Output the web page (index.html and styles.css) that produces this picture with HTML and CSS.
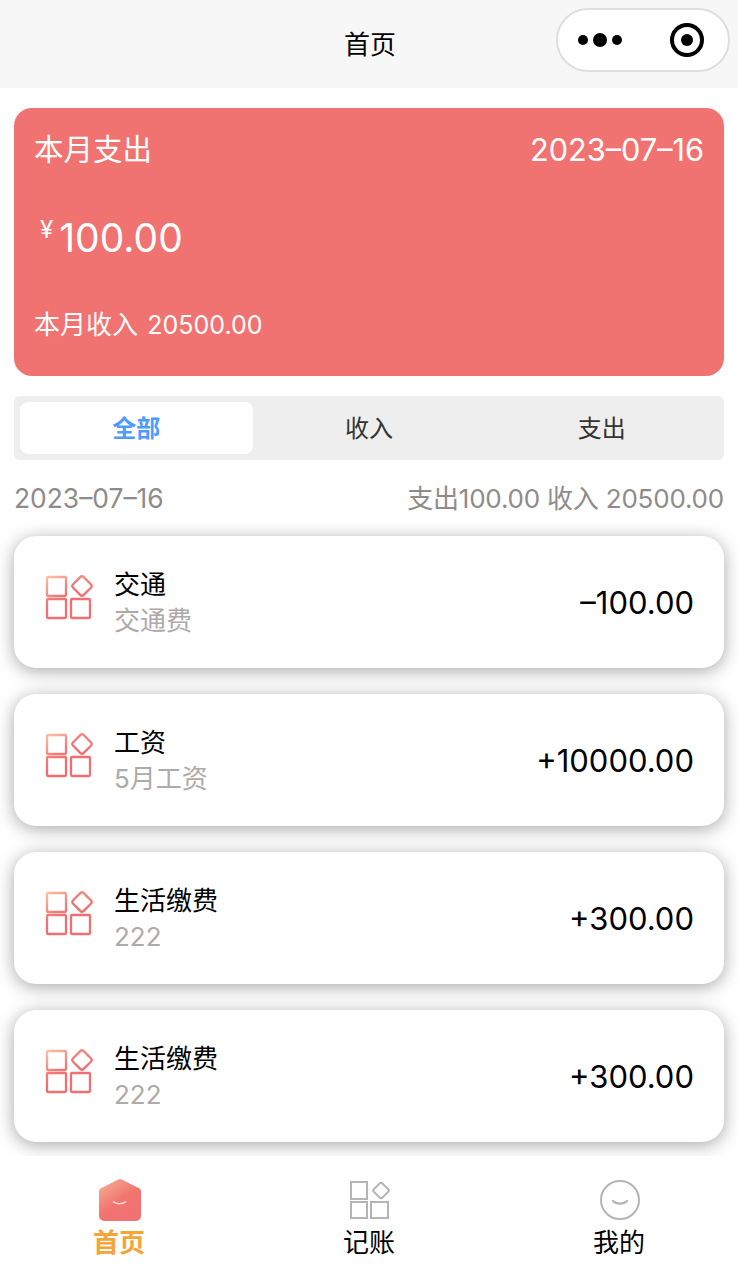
FILE: index.html
```html
<!DOCTYPE html>
<html lang="zh-CN">
<head>
    <meta charset="UTF-8">
    <meta name="viewport" content="width=device-width, initial-scale=1.0">
    <title>首页</title>
    <link rel="stylesheet" href="styles.css">
</head>
<body>
    <svg class="defs" width="0" height="0">
        <defs>
            <linearGradient id="grid-grad" gradientUnits="userSpaceOnUse" x1="3" y1="0" x2="20" y2="28">
                <stop offset="0" stop-color="#fcc8a8"/>
                <stop offset="0.7" stop-color="#f27c79"/>
                <stop offset="1" stop-color="#f06f73"/>
            </linearGradient>
            <linearGradient id="home-grad" x1="0.1" y1="0" x2="0.7" y2="0.8">
                <stop offset="0" stop-color="#f6b096"/>
                <stop offset="0.65" stop-color="#f1746f"/>
                <stop offset="1" stop-color="#f17273"/>
            </linearGradient>
            <g id="grid-icon" fill="none" stroke="url(#grid-grad)" stroke-width="2.300" stroke-linejoin="round">
                <rect x="3" y="3" width="19" height="19" rx="1"/>
                <rect x="3" y="25" width="19" height="19" rx="1"/>
                <rect x="27" y="25" width="19" height="19" rx="1"/>
                <rect x="30.500" y="4.500" width="15" height="15" rx="2.500" transform="rotate(45 38 12)"/>
            </g>
        </defs>
    </svg>

    <header class="nav">
        <span class="nav-title">首页</span>
        <div class="capsule">
            <div class="dots"><i></i><i class="big"></i><i></i></div>
            <div class="target"><i></i></div>
        </div>
    </header>

    <main class="content">
        <section class="hero">
            <div class="hero-top">
                <span class="hero-label">本月支出</span>
                <span class="hero-date">2023–07–16</span>
            </div>
            <div class="hero-amount"><span class="yen">¥</span>100.00</div>
            <div class="hero-income">本月收入 <span class="hero-income-num">20500.00</span></div>
        </section>

        <div class="tabs">
            <div class="tab active">全部</div>
            <div class="tab">收入</div>
            <div class="tab">支出</div>
        </div>

        <div class="day-row">
            <span class="day-date">2023–07–16</span>
            <span class="day-sum">支出100.00 收入 20500.00</span>
        </div>

        <ul class="list">
            <li class="card">
                <svg class="card-icon" viewBox="0 0 50 46"><use href="#grid-icon"/></svg>
                <div class="card-text">
                    <div class="card-title">交通</div>
                    <div class="card-note">交通费</div>
                </div>
                <div class="card-money">–100.00</div>
            </li>
            <li class="card">
                <svg class="card-icon" viewBox="0 0 50 46"><use href="#grid-icon"/></svg>
                <div class="card-text">
                    <div class="card-title">工资</div>
                    <div class="card-note">5月工资</div>
                </div>
                <div class="card-money">+10000.00</div>
            </li>
            <li class="card">
                <svg class="card-icon" viewBox="0 0 50 46"><use href="#grid-icon"/></svg>
                <div class="card-text">
                    <div class="card-title">生活缴费</div>
                    <div class="card-note">222</div>
                </div>
                <div class="card-money">+300.00</div>
            </li>
            <li class="card">
                <svg class="card-icon" viewBox="0 0 50 46"><use href="#grid-icon"/></svg>
                <div class="card-text">
                    <div class="card-title">生活缴费</div>
                    <div class="card-note">222</div>
                </div>
                <div class="card-money">+300.00</div>
            </li>
        </ul>
    </main>

    <nav class="tabbar">
        <div class="bar-item active">
            <svg class="bar-icon" viewBox="0 0 44 44">
                <path d="M20.800 1.800a3.600 3.600 0 0 1 4.400 0L42.500 10.500a3 3 0 0 1 1.500 2.500V38a5 5 0 0 1-5 5H7a5 5 0 0 1-5-5V13a3 3 0 0 1 1.500-2.500z" fill="url(#home-grad)"/>
                <path d="M16.500 23.800c3 2.600 9 2.600 12 0" fill="none" stroke="#fcd5cc" stroke-width="1.600" stroke-linecap="round"/>
            </svg>
            <span>首页</span>
        </div>
        <div class="bar-item">
            <svg class="bar-icon" viewBox="0 0 44 44" fill="none" stroke="#b4b4b4" stroke-width="2">
                <rect x="4" y="4" width="16" height="17"/>
                <rect x="4" y="24" width="16" height="16"/>
                <rect x="24" y="24" width="17" height="16"/>
                <rect x="28" y="6.500" width="12" height="12" rx="2" transform="rotate(45 34 12.500)"/>
            </svg>
            <span>记账</span>
        </div>
        <div class="bar-item">
            <svg class="bar-icon" viewBox="0 0 44 44" fill="none" stroke="#b4b4b4">
                <circle cx="23" cy="22" r="19" stroke-width="2"/>
                <path d="M16 23c3.500 3.500 10.500 3.500 14 0" stroke-width="2.400" stroke-linecap="round"/>
            </svg>
            <span>我的</span>
        </div>
    </nav>
</body>
</html>
```

FILE: styles.css
```css
* {
    box-sizing: border-box;
}

body {
    display: flex;
    flex-direction: column;
    height: 100vh;
    margin: 0;
    background-color: white;
    color: black;
    font-family: Inter, "Noto Sans CJK SC", sans-serif;
    overflow: hidden;
}

.defs {
    position: absolute;
}

.nav {
    display: flex;
    justify-content: center;
    align-items: center;
    flex: none;
    position: relative;
    height: 88px;
    padding: 0 0 4px 2px;
    background-color: #f7f7f7;
}

.nav-title {
    font-size: 26px;
}

.capsule {
    display: flex;
    justify-content: space-between;
    align-items: center;
    position: absolute;
    top: 8px;
    left: 556px;
    width: 174px;
    height: 64px;
    padding: 0 24px 0 20px;
    background-color: white;
    border: 2px solid #dedede;
    border-radius: 32px;
}

.dots {
    display: flex;
    align-items: center;
    gap: 5px;
}

.dots i {
    display: block;
    width: 10px;
    height: 10px;
    background-color: black;
    border-radius: 50%;
}

.dots i.big {
    width: 14px;
    height: 14px;
}

.target {
    display: flex;
    justify-content: center;
    align-items: center;
    width: 34px;
    height: 34px;
    border: 4px solid black;
    border-radius: 50%;
}

.target i {
    display: block;
    width: 12px;
    height: 12px;
    background-color: black;
    border-radius: 50%;
}

.content {
    flex: 1;
    min-height: 0;
    padding: 20px 14px 0;
    overflow: hidden;
}

.hero {
    height: 268px;
    padding: 21px 20px 0;
    background-color: #f17371;
    border-radius: 18px;
    color: white;
}

.hero-top {
    display: flex;
    justify-content: space-between;
    align-items: center;
    height: 40px;
}

.hero-label {
    padding-bottom: 4px;
    font-size: 29.500px;
}

.hero-date {
    font-size: 30.700px;
}

.hero-amount {
    margin-top: 44px;
    padding-left: 6px;
    font-size: 39px;
    line-height: 50px;
}

.yen {
    position: relative;
    top: -14px;
    margin-right: 6px;
    font-size: 24px;
}

.hero-income {
    margin-top: 38px;
    font-size: 26px;
    line-height: 36px;
}

.hero-income-num {
    margin-left: 2px;
    font-size: 25px;
}

.tabs {
    display: flex;
    height: 64px;
    margin-top: 20px;
    padding: 6px;
    background-color: #eeeeee;
    border-radius: 6px;
}

.tab {
    display: flex;
    justify-content: center;
    align-items: center;
    flex: 1;
    padding-bottom: 4px;
    border-radius: 8px;
    font-size: 24px;
    color: #333333;
}

.tab.active {
    background-color: white;
    color: #4f9bfb;
    font-weight: 700;
}

.day-row {
    display: flex;
    justify-content: space-between;
    align-items: center;
    height: 36px;
    margin-top: 20px;
    font-size: 26px;
    color: #8f8b8b;
}

.day-date {
    font-size: 26.400px;
}

.day-sum {
    padding-bottom: 4px;
    letter-spacing: -0.2px;
}

.list {
    display: flex;
    flex-direction: column;
    gap: 26px;
    margin: 20px 0 0;
    padding: 0;
    list-style: none;
}

.card {
    display: flex;
    align-items: center;
    flex: none;
    height: 132px;
    padding: 0 30px;
    background-color: white;
    border-radius: 22px;
    box-shadow: 0 3px 18px rgba(0, 0, 0, 0.35);
}

.card-icon {
    flex: none;
    width: 50px;
    height: 46px;
    margin-bottom: 10px;
}

.card-text {
    flex: 1;
    margin-left: 20px;
    padding-top: 2px;
}

.card-title {
    font-size: 26px;
    line-height: 36px;
}

.card-note {
    font-size: 26px;
    line-height: 36px;
    color: #aeaaaa;
}

.card-money {
    font-size: 31px;
}

.tabbar {
    display: grid;
    grid-template-columns: repeat(3, 250px);
    justify-content: center;
    flex: none;
    position: relative;
    height: 126px;
    padding: 22px 0 0;
    background-color: white;
}

.bar-item {
    display: flex;
    flex-direction: column;
    align-items: center;
    font-size: 26px;
    line-height: 36px;
}

.bar-item.active {
    color: #f6a437;
    font-weight: 700;
}

.bar-icon {
    width: 44px;
    height: 44px;
    margin-bottom: 3px;
}
```
